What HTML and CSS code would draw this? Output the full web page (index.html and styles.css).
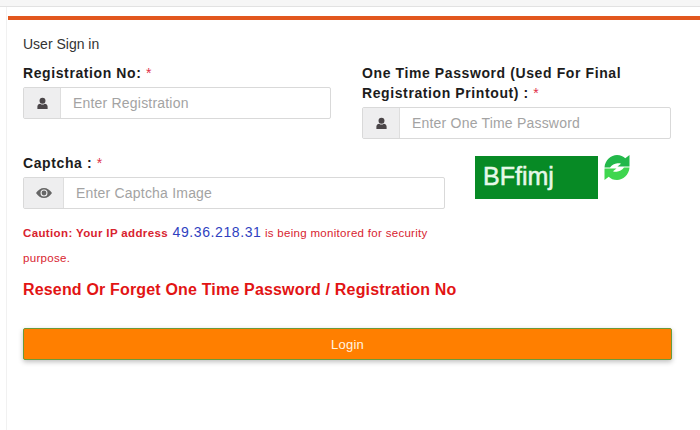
FILE: index.html
```html
<!DOCTYPE html>
<html lang="en">
<head>
<meta charset="utf-8">
<title>User Sign in</title>
<link rel="stylesheet" href="styles.css">
</head>
<body>
<div class="topstrip"></div>
<main class="page">
  <form class="card">
    <div class="title">User Sign in</div>
    <div class="row-top">
      <div class="field field-reg">
        <label class="label">Registration No: <span class="req">*</span></label>
        <div class="group">
          <span class="addon addon-user">
            <svg class="icon" viewBox="0 0 14 14"><circle cx="7" cy="4" r="3.2"/><path d="M1.5 13V10.2C1.5 8.5 3 7.4 4.6 7.2 5.4 7.9 6.1 8.1 7 8.1S8.6 7.9 9.4 7.2C11 7.4 12.5 8.5 12.5 10.2V13Z"/></svg>
          </span>
          <input class="input" placeholder="Enter Registration">
        </div>
      </div>
      <div class="field field-otp">
        <label class="label">One Time Password (Used For Final Registration Printout) : <span class="req">*</span></label>
        <div class="group">
          <span class="addon addon-user">
            <svg class="icon" viewBox="0 0 14 14"><circle cx="7" cy="4" r="3.2"/><path d="M1.5 13V10.2C1.5 8.5 3 7.4 4.6 7.2 5.4 7.9 6.1 8.1 7 8.1S8.6 7.9 9.4 7.2C11 7.4 12.5 8.5 12.5 10.2V13Z"/></svg>
          </span>
          <input class="input" placeholder="Enter One Time Password">
        </div>
      </div>
    </div>
    <div class="row-captcha">
      <div class="field field-captcha">
        <label class="label">Captcha : <span class="req">*</span></label>
        <div class="group">
          <span class="addon addon-eye">
            <svg class="icon icon-eye" viewBox="0 0 16 10"><path fill-rule="evenodd" d="M0 5C2 2 4.8 0 8 0S14 2 16 5C14 8 11.2 10 8 10S2 8 0 5ZM8 1.5A3.5 3.5 0 1 0 8 8.5 3.5 3.5 0 1 0 8 1.5Z"/><circle cx="8" cy="5" r="2.4"/></svg>
          </span>
          <input class="input" placeholder="Enter Captcha Image">
        </div>
      </div>
      <div class="captcha-box">
        <div class="captcha-image">BFfimj</div>
        <svg class="refresh" viewBox="0 0 28 26">
          <path fill="#22b84a" d="M1.500 13C2 5.500 8 .5 14 .5 17.500 .5 20.300 1.800 22.300 3.800L26.500 .5V12H14.500L18 9.200C17 8.700 15.800 8.600 14.400 8.800 11.500 9.200 9 10.500 7 13Z"/>
          <path fill="#3fd64f" transform="rotate(180 14 13)" d="M1.500 13C2 5.500 8 .5 14 .5 17.500 .5 20.300 1.800 22.300 3.800L26.500 .5V12H14.500L18 9.200C17 8.700 15.800 8.600 14.400 8.800 11.500 9.200 9 10.500 7 13Z"/>
        </svg>
      </div>
    </div>
    <p class="caution"><b>Caution: Your IP address</b> <span class="ip">49.36.218.31</span> is being monitored for security purpose.</p>
    <a class="resend">Resend Or Forget One Time Password / Registration No</a>
    <button type="button" class="login">Login</button>
  </form>
</main>
</body>
</html>
```
FILE: styles.css
```css
* { box-sizing: border-box; }
html, body { margin: 0; height: 100%; overflow: hidden; }
body {
  background: #fff;
  font-family: "Liberation Sans", Arial, sans-serif;
  color: #222;
}
.topstrip {
  height: 7px;
  background: #f6f6f6;
  border-bottom: 1px solid #e2e2e2;
}
.page {
  height: 423px;
  margin-left: 6px;
  padding-top: 9px;
  border-left: 1px solid #f1f1f1;
}
.card {
  margin-left: 1px;
  border-top: 4px solid #e2571e;
  padding: 16px 20px 0 15px;
}
.title {
  font-size: 14px;
  line-height: 16px;
  color: #333;
}
.row-top {
  display: flex;
  margin-top: 7px;
}
.field-reg { width: 308px; margin-top: 4px; }
.field-otp { width: 309px; margin-left: 31px; margin-top: 4px; }
.label {
  display: block;
  font-size: 14px;
  line-height: 20px;
  font-weight: bold;
  letter-spacing: 0.6px;
  color: #1c1c1c;
}
.req { color: #e0304a; font-weight: normal; }
.group {
  display: flex;
  height: 32px;
  margin-top: 4px;
  border: 1px solid #d9d9d9;
  border-radius: 2px;
  background: #fff;
}
.addon {
  flex: none;
  display: flex;
  align-items: center;
  justify-content: center;
  background: #eeeeef;
  border-right: 1px solid #dedede;
}
.addon-user { width: 37px; }
.addon-eye { width: 40px; }
.icon { width: 13px; height: 13px; fill: #4a4548; }
.icon-eye { width: 16px; height: 10px; fill: #666; }
.input {
  flex: 1;
  min-width: 0;
  border: 0;
  outline: 0;
  padding: 0 12px;
  font: 14px "Liberation Sans", Arial, sans-serif;
  letter-spacing: 0.2px;
  background: transparent;
}
.input::placeholder { color: #a3a3a3; opacity: 1; }
.row-captcha {
  display: flex;
  margin-top: 14px;
}
.field-captcha { width: 422px; }
.captcha-box {
  display: flex;
  align-items: flex-start;
  margin-left: 30px;
  margin-top: 3px;
}
.captcha-image {
  width: 123px;
  height: 43px;
  padding-left: 8px;
  background: #078a25;
  color: #e6f8e8;
  font-size: 25px;
  line-height: 40px;
  -webkit-text-stroke: 0.5px #e6f8e8;
}
.refresh { width: 28px; height: 27px; margin-left: 5px; margin-top: -2px; }
.caution {
  margin: 11px 0 0;
  width: 425px;
  font-size: 11.5px;
  line-height: 25px;
  letter-spacing: 0.3px;
  color: #d8232f;
}
.caution b { letter-spacing: 0.37px; }
.ip { font-size: 14px; margin-left: 1px; color: #2f3fbf; letter-spacing: 0.6px; }
.resend {
  display: block;
  margin-top: 9px;
  font-size: 16px;
  line-height: 20px;
  font-weight: bold;
  letter-spacing: 0.17px;
  color: #e21414;
}
.login {
  display: block;
  width: 649px;
  height: 32px;
  margin-top: 28px;
  border: 1px solid #6b9a3a;
  border-radius: 2px;
  background: #ff7f00;
  color: #fff4e0;
  font: 13px "Liberation Sans", Arial, sans-serif;
  letter-spacing: 0.2px;
  box-shadow: 0 2px 5px rgba(0,0,0,.25);
}
```
